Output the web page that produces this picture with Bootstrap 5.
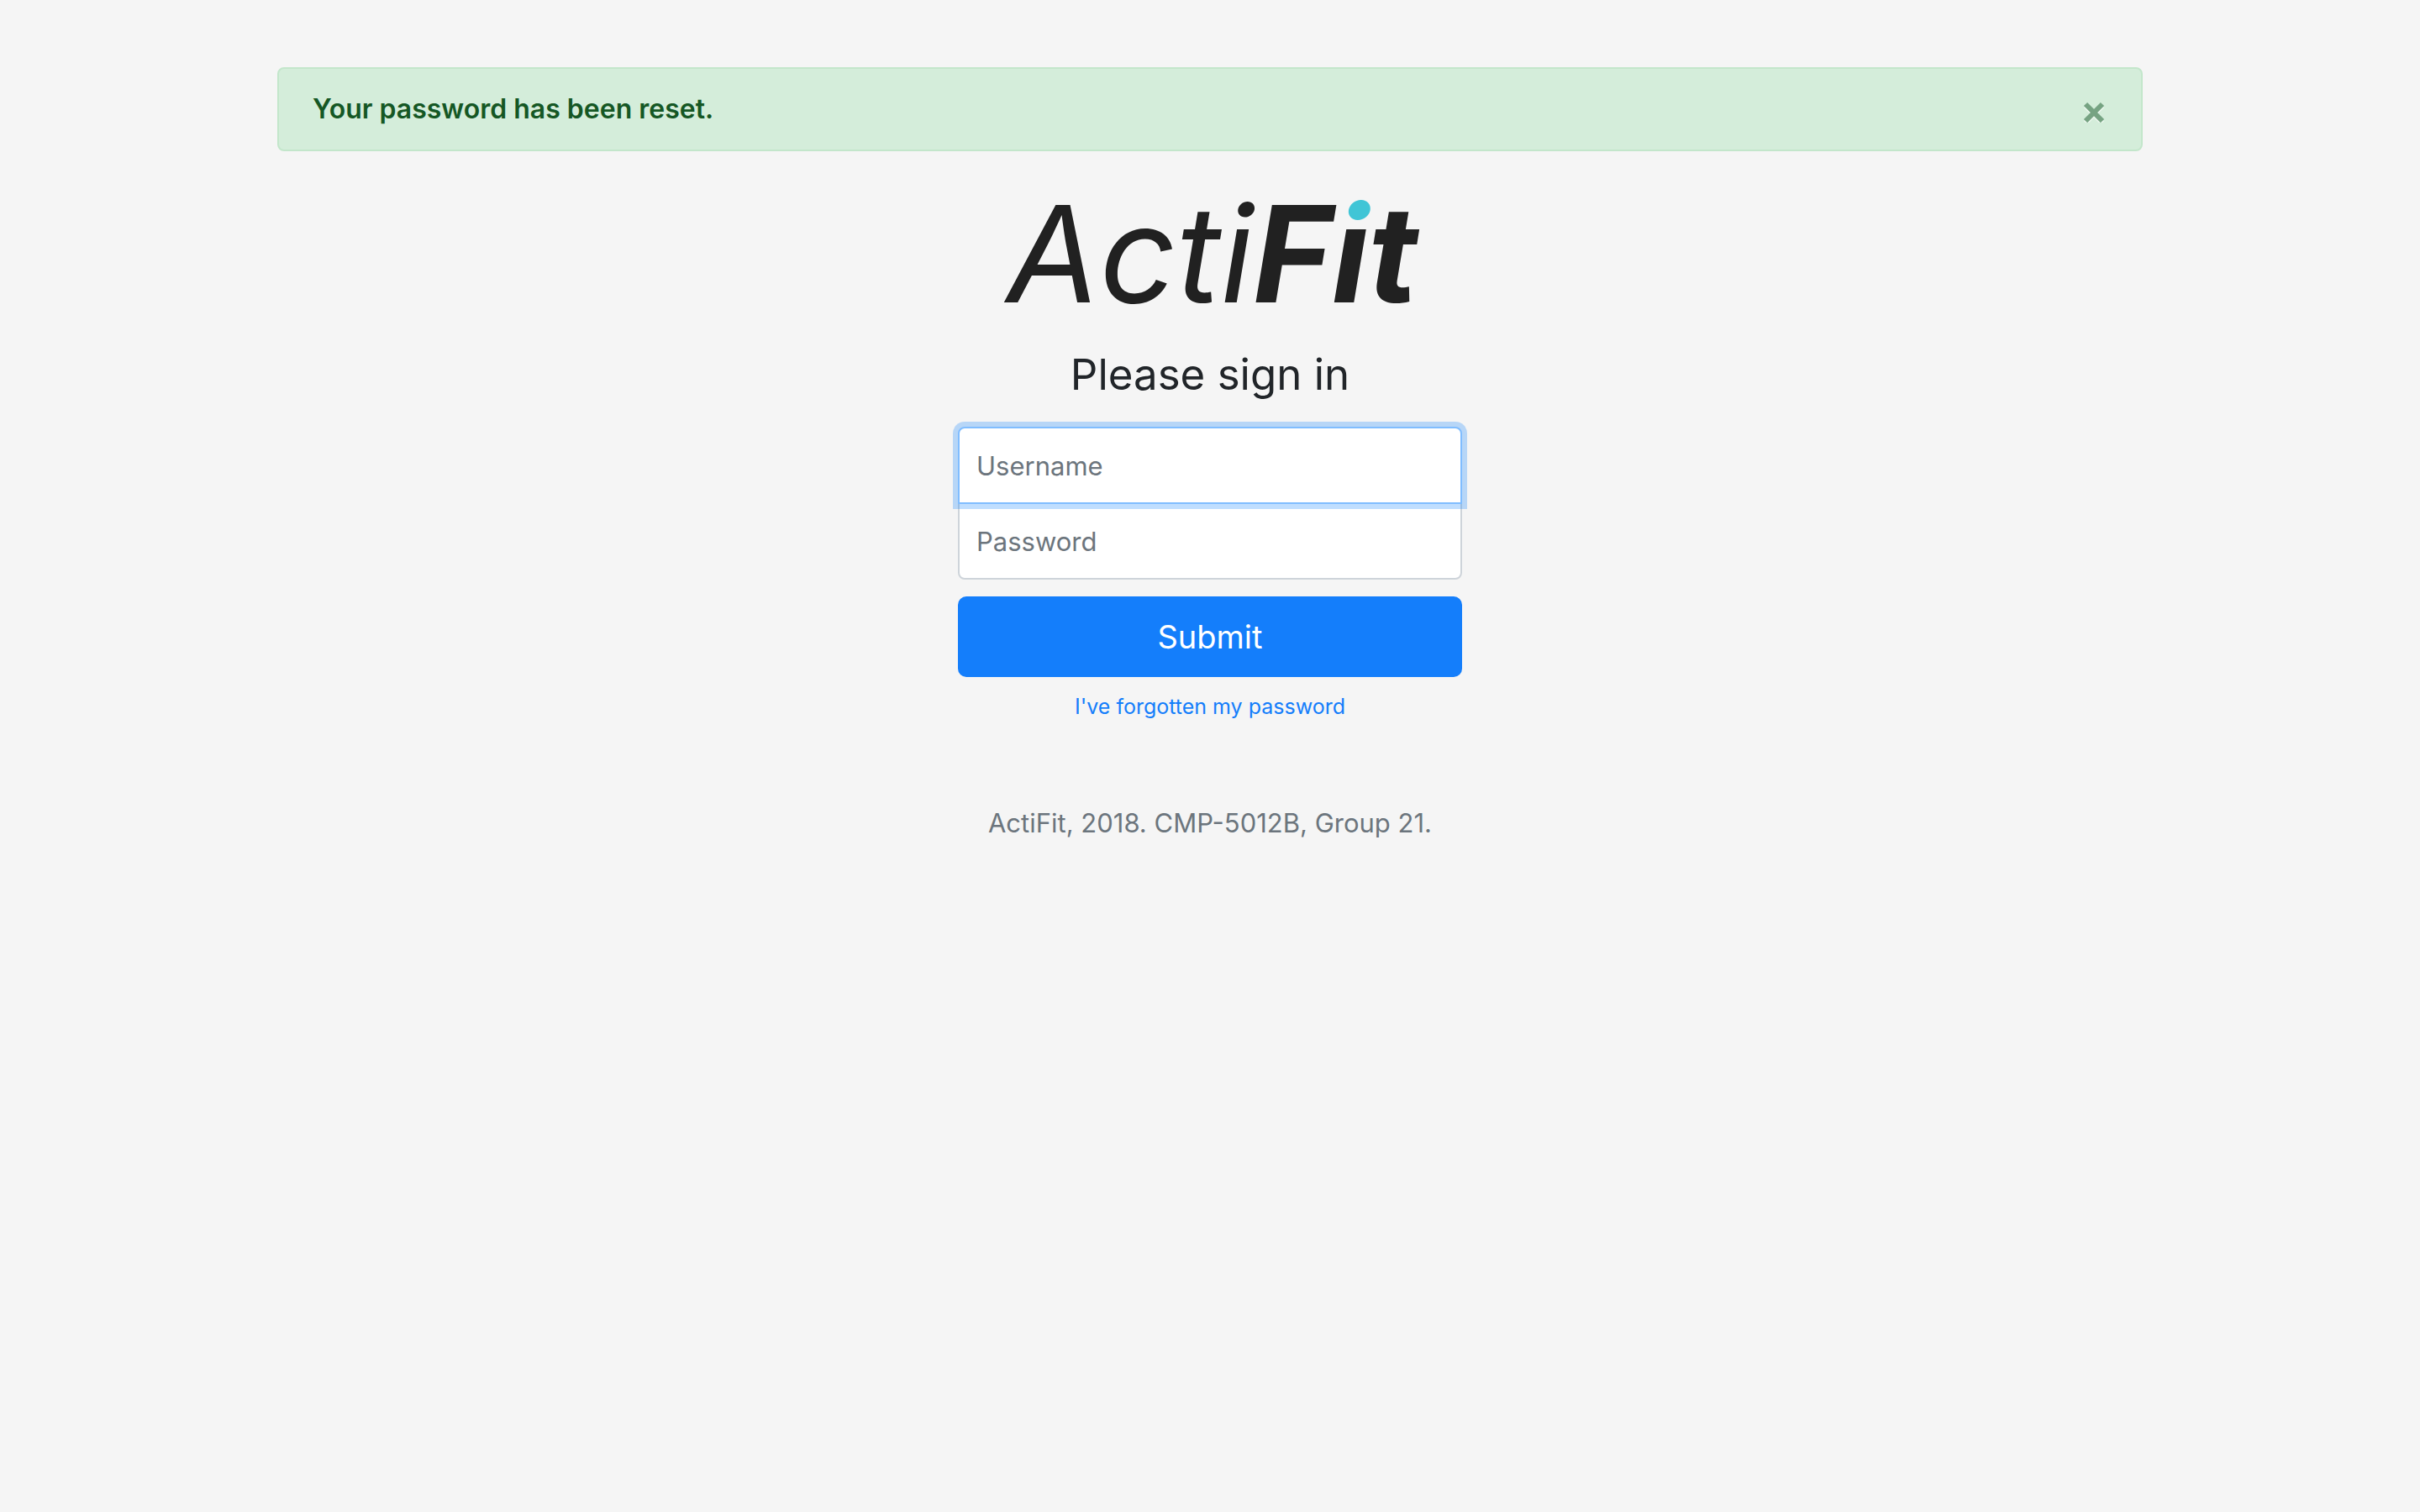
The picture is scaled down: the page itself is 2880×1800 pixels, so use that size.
<!DOCTYPE html>
<html lang="en">
<head>
<meta charset="utf-8">
<meta name="viewport" content="width=device-width, initial-scale=1">
<title>ActiFit - Sign in</title>
<link href="https://cdn.jsdelivr.net/npm/bootstrap@5.3.0/dist/css/bootstrap.min.css" rel="stylesheet">
<style>
  body { background: #f5f5f5; color: #212529; font-family: Inter, "Liberation Sans", sans-serif; font-size: 31px; line-height: 48px; }
  .page-wrap { max-width: 2280px; padding: 80px 30px 0; }
  .notice { background: #d4edda; border: 2px solid #c3e6cb; border-radius: 8px; color: #155724; padding: 24px 40px; margin-bottom: 32px; }
  .notice strong { font-size: 32px; font-weight: 600; }
  .signin { max-width: 660px; padding: 30px; }
  .logo { display: block; width: 492px; height: 120px; overflow: visible; margin: 0 auto 52px; font-size: 160px; font-style: italic; fill: #212121; }
  .signin h1 { font-size: 51px; line-height: 64px; margin-bottom: 30px; }
  .signin .form-control { height: 92px; padding: 20px; border: 2px solid #ced4da; font-size: 31px; line-height: 48px; }
  .signin .form-control::placeholder { color: #6c757d; }
  .signin .field-top { border-color: #80bdff; border-radius: 8px 8px 0 0; box-shadow: 0 0 0 6px rgba(0, 123, 255, .25); margin-bottom: -2px; position: relative; z-index: 2; }
  .signin .field-bottom { border-radius: 0 0 8px 8px; margin-bottom: 20px; }
  .btn-send, .btn-send:hover { background: #147efb; color: #fff; }
  .btn-send { height: 96px; border: 0; border-radius: 10px; font-size: 38px; line-height: 60px; }
  .forgot { color: #147efb; font-size: 25px; line-height: 38px; text-decoration: none; }
  .foot { color: #6c757d; margin: 96px 0 0; }
</style>
<script src="https://cdn.jsdelivr.net/npm/bootstrap@5.3.0/dist/js/bootstrap.bundle.min.js" defer></script>
</head>
<body>
<div class="container-fluid page-wrap">
  <div class="notice alert d-flex justify-content-between align-items-center" role="alert">
    <strong>Your password has been reset.</strong>
    <button type="button" class="btn p-0 border-0 d-flex" data-bs-dismiss="alert" aria-label="Close">
      <svg width="32" height="32" viewBox="0 0 32 32" fill="none" stroke-width="6"><path stroke="#eef8f0" d="M6 12 26 32M26 12 6 32"/><path stroke="#76a382" d="M6 10 26 30M26 10 6 30"/></svg>
    </button>
  </div>
  <main class="signin mx-auto text-center">
    <svg class="logo" viewBox="0 0 492 120" role="img" aria-label="ActiFit">
      <!-- two-tone fill: teal above the stem, dark below -->
      <linearGradient id="dotTone" gradientUnits="userSpaceOnUse" x1="0" y1="0" x2="0" y2="50">
        <stop offset="50%" stop-color="#40c5d6"/>
        <stop offset="50%" stop-color="#212121"/>
      </linearGradient>
      <text x="4" y="118">Acti<tspan font-weight="700">F<tspan fill="url(#dotTone)">i</tspan>t</tspan></text>
    </svg>
    <form>
      <h1 class="fw-normal">Please sign in</h1>
      <input type="text" class="form-control field-top" placeholder="Username" aria-label="Username">
      <input type="password" class="form-control field-bottom" placeholder="Password" aria-label="Password">
      <button type="submit" class="btn btn-send w-100 mb-3">Submit</button>
      <a href="#" class="forgot d-block">I've forgotten my password</a>
    </form>
    <p class="foot">ActiFit, 2018. CMP-5012B, Group 21.</p>
  </main>
</div>
</body>
</html>
